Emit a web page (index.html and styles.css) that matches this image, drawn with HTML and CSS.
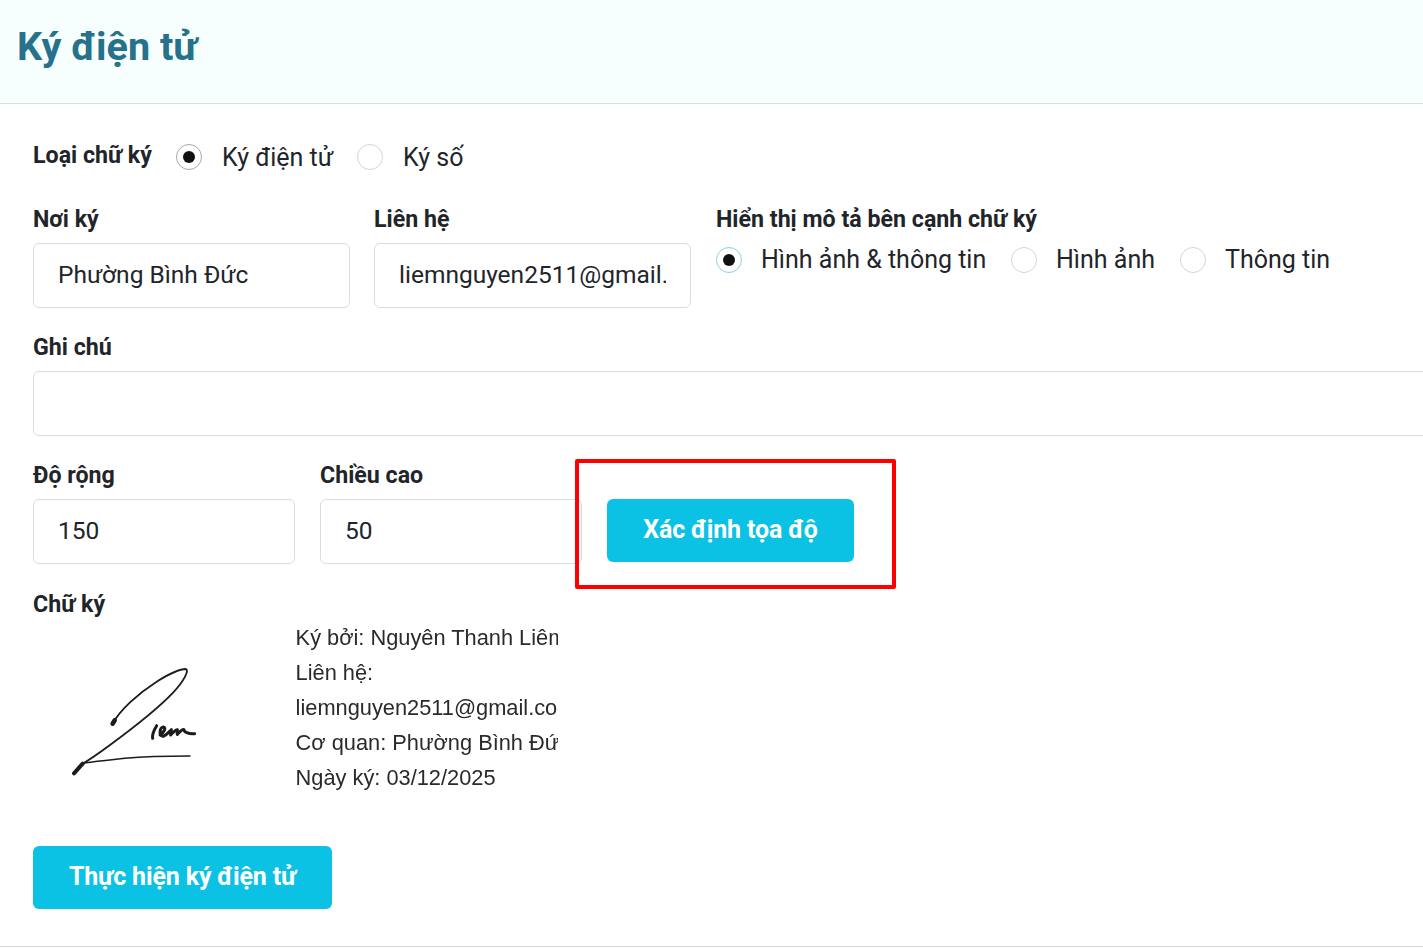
FILE: index.html
```html
<!DOCTYPE html>
<html lang="vi">
<head>
<meta charset="utf-8">
<title>Ký điện tử</title>
<link rel="stylesheet" href="styles.css">
</head>
<body>
<header class="page-header"><h1 class="page-title">Ký điện tử</h1></header>
<main class="content">
  <div class="type-row">
    <span class="label">Loại chữ ký</span>
    <label class="option option-type1"><input class="radio" type="radio" name="type" checked><span>Ký điện tử</span></label>
    <label class="option"><input class="radio" type="radio" name="type"><span>Ký số</span></label>
  </div>
  <div class="row row-first">
    <div class="field field-wide"><div class="label">Nơi ký</div><input class="text-input" type="text" value="Phường Bình Đức"></div>
    <div class="field field-wide"><div class="label">Liên hệ</div><input class="text-input" type="text" value="liemnguyen2511@gmail.com"></div>
    <div class="field field-display">
      <div class="label">Hiển thị mô tả bên cạnh chữ ký</div>
      <div class="display-options">
        <label class="option option-d1"><input class="radio radio-focus" type="radio" name="display" checked><span>Hình ảnh &amp; thông tin</span></label>
        <label class="option option-d2"><input class="radio" type="radio" name="display"><span>Hình ảnh</span></label>
        <label class="option option-d3"><input class="radio" type="radio" name="display"><span>Thông tin</span></label>
      </div>
    </div>
  </div>
  <div class="field field-note"><div class="label">Ghi chú</div><input class="text-input note-input" type="text"></div>
  <div class="row row-size">
    <div class="field field-size"><div class="label">Độ rộng</div><input class="text-input" type="text" value="150"></div>
    <div class="field field-size"><div class="label">Chiều cao</div><input class="text-input" type="text" value="50"></div>
    <button class="btn btn-locate" type="button">Xác định tọa độ</button>
  </div>
  <div class="label label-sig">Chữ ký</div>
  <div class="signature">
    <svg class="sig-image" viewBox="0 0 450 390" width="150" height="130" fill="none" stroke="#1c1c1c" stroke-linecap="round" stroke-linejoin="round" aria-hidden="true">
      <path d="M158 206C180 165 235 115 290 80C325 58 360 42 378 42C388 46 372 78 340 112C290 165 215 222 150 270C115 296 85 316 68 326" stroke-width="5.5"/>
      <path d="M158 206l6-10" stroke-width="14"/>
      <path d="M68 326L42 355" stroke-width="12"/>
      <path d="M72 324C120 318 150 315 195 310C260 304 320 303 390 303" stroke-width="4.5"/>
      <path d="M290 212C282 225 276 240 278 250M300 240C312 232 320 218 310 216C298 218 296 246 310 244C322 240 328 228 334 224C332 232 330 238 332 240C340 232 348 222 352 224C352 230 350 236 352 238C360 230 366 222 372 224C372 230 384 238 404 236" stroke-width="9"/>
    </svg>
    <div class="sig-text">
      <div>Ký bởi: Nguyên Thanh Liêm</div>
      <div>Liên hệ:</div>
      <div>liemnguyen2511@gmail.com</div>
      <div>Cơ quan: Phường Bình Đức</div>
      <div>Ngày ký: 03/12/2025</div>
    </div>
  </div>
  <button class="btn btn-sign" type="button">Thực hiện ký điện tử</button>
</main>
<div class="bottom-line"></div>
<div class="highlight"></div>
</body>
</html>
```
FILE: styles.css
```css
html, body { margin: 0; padding: 0; overflow: hidden; height: 100%; background: #fff; }
body { position: relative; font-family: Roboto, "Liberation Sans", sans-serif; color: #212529; }
.page-header { height: 103px; background: #f6fffe; border-bottom: 1px solid #d9dddd; display: flex; align-items: center; padding-left: 17px; }
.page-title { margin: 0 0 10px; font-size: 39.6px; font-weight: 700; color: #26718b; line-height: 46px; }
.content { padding: 40px 0 0 33px; }
.label { font-size: 23.2px; font-weight: 700; line-height: 24px; color: #212529; }
.type-row { display: flex; align-items: center; height: 26px; }
.option { display: flex; align-items: center; font-size: 25px; color: #212529; }
.radio { appearance: none; margin: 0; width: 26px; height: 26px; border: 1px solid #d5d5d5; border-radius: 50%; background: #fff; display: flex; align-items: center; justify-content: center; flex: none; }
.radio:checked { border-color: #a8a8a8; }
.radio:checked::before { content: ""; width: 12px; height: 12px; border-radius: 50%; background: #111; }
.radio-focus:checked { border-color: #8fcfe6; }
.type-row .label { width: 143px; margin-bottom: 4px; }
.type-row .option .radio { margin-right: 20px; }
.option-type1 { width: 181px; }
.row { display: flex; }
.row-first { gap: 24px; margin-top: 37px; }
.field { display: flex; flex-direction: column; }
.field-wide { width: 317px; }
.field-display { margin-left: 1px; }
.text-input { box-sizing: border-box; height: 65px; margin-top: 12px; width: 100%; padding: 0 24px 3px; border: 1px solid #dcdcdc; border-radius: 6px; font-family: inherit; font-size: 24.5px; color: #212529; background: #fff; outline: none; }
.display-options { display: flex; margin-top: 15px; height: 27px; }
.display-options .radio { margin-right: 19px; }
.option-d1 { width: 295px; }
.option-d2 { width: 169px; }
.field-note { margin-top: 27px; }
.note-input { width: 1500px; }
.row-size { margin-top: 27px; gap: 25px; }
.field-size { width: 262px; }
.btn { border: 0; border-radius: 6px; background: #0bc2e5; color: #fff; font-family: inherit; font-size: 25px; font-weight: 700; height: 63px; padding: 0 0 2px; letter-spacing: -0.15px; }
.btn-locate { width: 247px; margin-top: 36px; }
.label-sig { margin-top: 28px; }
.signature { display: flex; margin-top: 4px; height: 175px; }
.sig-image { flex: none; margin: 35px 0 0 27px; filter: blur(0.6px); }
.sig-text { margin-left: 85.6px; width: 262px; overflow: hidden; white-space: nowrap; font-family: "Liberation Sans", Arial, sans-serif; font-size: 21.8px; line-height: 35px; color: #2a2a2a; filter: blur(0.4px); }
.btn-sign { display: block; width: 299px; margin-top: 51px; }
.bottom-line { position: absolute; left: 0; right: 0; top: 946px; height: 1px; background: #d9d9d9; }
.highlight { position: absolute; left: 575px; top: 459px; width: 321px; height: 130px; box-sizing: border-box; border: 4px solid #f00; border-radius: 2px; pointer-events: none; }
```
